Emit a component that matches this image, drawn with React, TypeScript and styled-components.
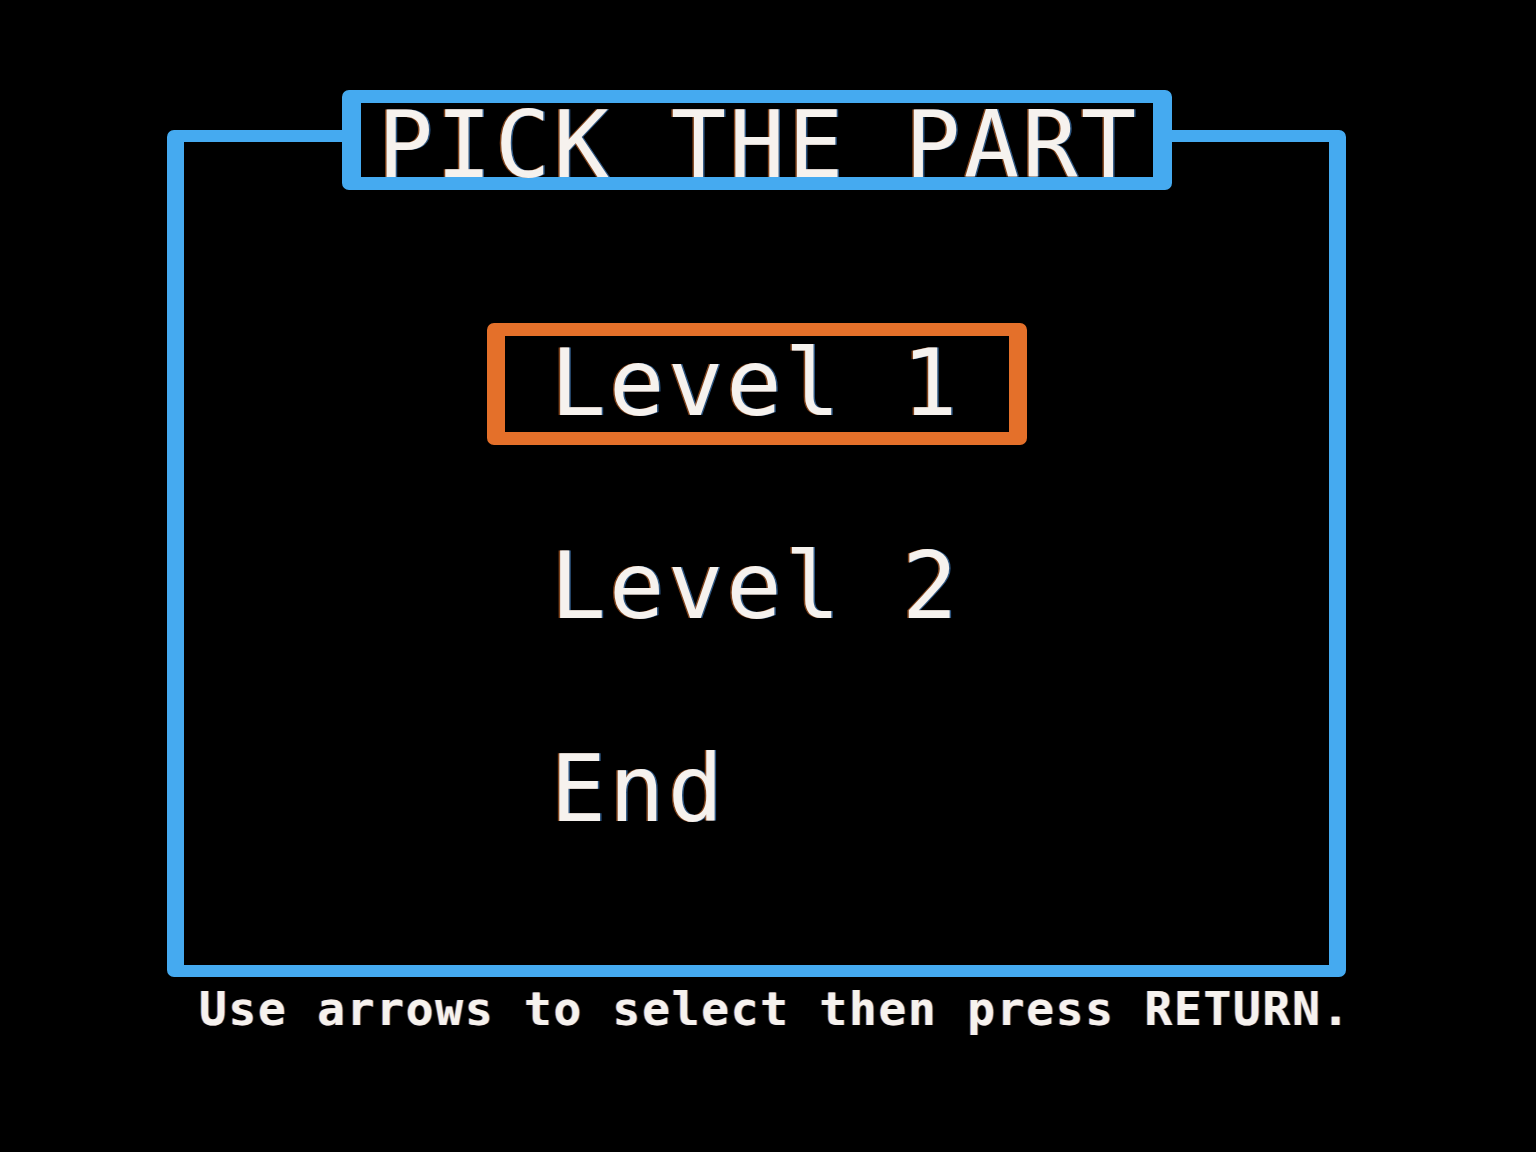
import React from "react";
import styled, { createGlobalStyle } from "styled-components";

const BLUE = "#45aaf0";
const ORANGE = "#e4702a";
const TEXT = "#f6f2ee";

const Global = createGlobalStyle`
  html, body {
    margin: 0;
    padding: 0;
    background: #000;
  }
  body {
    width: 1536px;
    height: 1152px;
    overflow: hidden;
    font-family: "DejaVu Sans Mono", "Liberation Mono", monospace;
  }
`;

const Screen = styled.div`
  width: 1536px;
  height: 1152px;
  box-sizing: border-box;
  background: #000;
  padding: 130px 0 0 167px;
  display: flex;
  flex-direction: column;
  align-items: flex-start;
`;

const Frame = styled.div`
  position: relative;
  width: 1179px;
  height: 847px;
  box-sizing: border-box;
  border-style: solid;
  border-color: ${BLUE};
  border-width: 12px 17px;
  border-radius: 7px;
  display: flex;
  flex-direction: column;
  align-items: center;
  padding-top: 181px;
`;

const TitleBox = styled.div`
  position: absolute;
  top: -52px;
  left: 158px;
  width: 830px;
  height: 100px;
  box-sizing: border-box;
  background: #000;
  border-style: solid;
  border-color: ${BLUE};
  border-width: 13px 19px;
  border-radius: 7px;
  display: flex;
  justify-content: center;
  padding-top: 8px;
`;

const BigText = styled.span`
  font-family: "DejaVu Sans Mono", "Liberation Mono", monospace;
  font-size: 92px;
  letter-spacing: 3.2px;
  color: ${TEXT};
  white-space: pre;
  text-shadow: -1.5px 0 rgba(230, 120, 50, 0.55), 1.5px 0 rgba(90, 170, 255, 0.5);
`;

const TitleText = styled(BigText)`
  line-height: 69px;
  margin-right: -3.2px;
`;

const Menu = styled.div`
  display: flex;
  flex-direction: column;
  gap: 81px;
`;

const MenuItem = styled.div<{ $selected?: boolean }>`
  width: 540px;
  height: 122px;
  box-sizing: border-box;
  border-style: solid;
  border-color: ${(p) => (p.$selected ? ORANGE : "transparent")};
  border-width: 13px 18px;
  border-radius: 7px;
  padding-left: 46px;
  display: flex;
  align-items: flex-start;
`;

const ItemText = styled(BigText)`
  line-height: 96px;
`;

const Footer = styled.div`
  margin: 9px 0 0 32px;
  font-family: "DejaVu Sans Mono", "Liberation Mono", monospace;
  font-weight: bold;
  font-size: 46px;
  line-height: 46px;
  letter-spacing: 1.85px;
  color: ${TEXT};
  white-space: pre;
  text-shadow: -1px 0 rgba(230, 120, 50, 0.55), 1px 0 rgba(90, 170, 255, 0.5);
`;

const items = ["Level 1", "Level 2", "End"];

export default function App() {
  return (
    <>
      <Global />
      <Screen>
        <Frame>
          <TitleBox>
            <TitleText>PICK THE PART</TitleText>
          </TitleBox>
          <Menu>
            {items.map((label, i) => (
              <MenuItem key={label} $selected={i === 0}>
                <ItemText>{label}</ItemText>
              </MenuItem>
            ))}
          </Menu>
        </Frame>
        <Footer>Use arrows to select then press RETURN.</Footer>
      </Screen>
    </>
  );
}
